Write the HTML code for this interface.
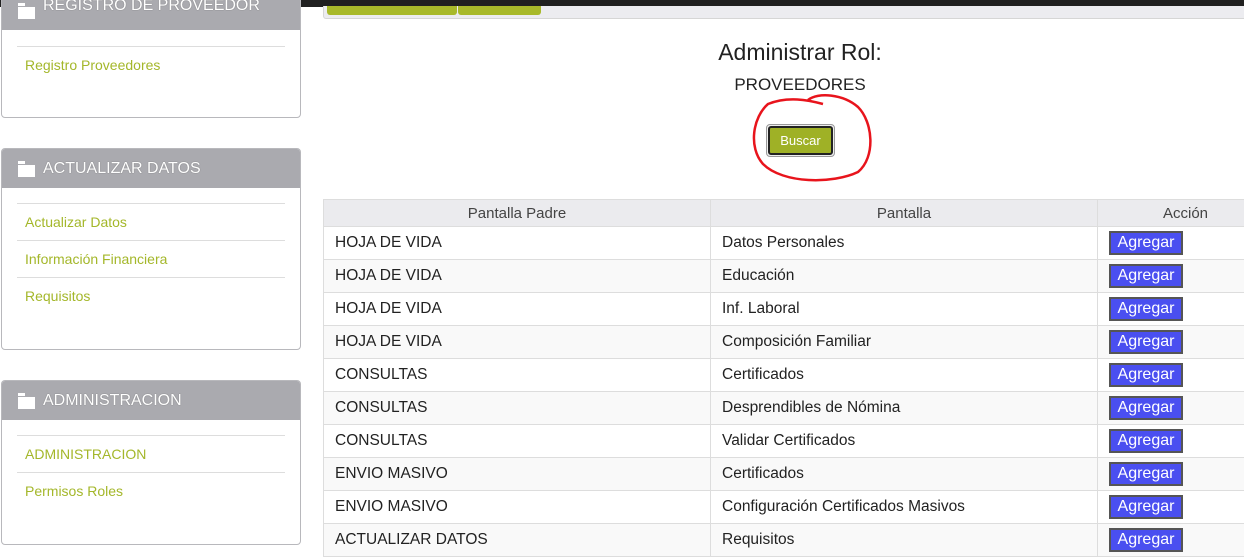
<!DOCTYPE html>
<html><head><meta charset="utf-8"><style>
*{margin:0;padding:0;box-sizing:border-box}
body{width:1244px;height:556px;overflow:hidden;background:#fff;font-family:"Liberation Sans",sans-serif;position:relative}
.top{position:absolute;left:0;top:0;width:1244px;height:7px;background:#202020}
.panel{position:absolute;left:1px;width:300px;border:1px solid #b8b8bc;border-radius:4px;background:#fff;overflow:hidden}
.ph{background:#aaaaaf;height:39px;color:#fff;font-size:16px;padding-left:41px;line-height:39px;position:relative;text-shadow:0 0 1px #666}
.ph:before{content:"";position:absolute;left:16px;top:14px;width:17px;height:12px;background:#fff;border-top:2px solid #aaaaaf}
.ph:after{content:"";position:absolute;left:16px;top:12px;width:7px;height:3px;background:#fff}
.lk{position:absolute;left:23px;font-size:14px;color:#a4b72a}
.hr{position:absolute;left:15px;width:268px;height:1px;background:#ddd}
.tbl{position:absolute;left:323px;top:199px;border-collapse:collapse;font-size:15.5px;color:#222;table-layout:fixed;width:1000px}
.tbl td,.tbl th{border:1px solid #ddd;height:33px;padding:0 11px;white-space:nowrap;overflow:hidden}
.tbl th{height:27px;background:#ebebee;font-weight:normal;color:#444;font-size:15px}
.tbl tr:nth-child(odd) td{background:#f9f9f9}
.btn{display:inline-block;background:#4a4ff0;color:#fff;border:2px solid #555;width:74px;height:24px;line-height:20px;text-align:center;font-size:16px;vertical-align:middle}
</style></head><body>
<div class="top"></div>
<div style="position:absolute;left:323px;top:6px;width:930px;height:13px;background:#ececf0;border:1px solid #d6d6d6;border-top:none;border-radius:0 0 3px 3px"></div>
<div style="position:absolute;left:327px;top:6px;width:130px;height:9px;background:#a8b92a;border-radius:0 0 3px 3px"></div>
<div style="position:absolute;left:458px;top:6px;width:83px;height:9px;background:#a8b92a;border-radius:0 0 3px 3px"></div>

<div class="panel" style="top:-10px;height:128px">
 <div class="ph" style="line-height:30px">REGISTRO DE PROVEEDOR</div>
 <div class="hr" style="top:55px"></div>
 <div class="lk" style="top:66px">Registro Proveedores</div>
</div>
<div class="panel" style="top:148px;height:202px">
 <div class="ph">ACTUALIZAR DATOS</div>
 <div class="hr" style="top:54px"></div>
 <div class="lk" style="top:65px">Actualizar Datos</div>
 <div class="hr" style="top:91px"></div>
 <div class="lk" style="top:102px">Información Financiera</div>
 <div class="hr" style="top:128px"></div>
 <div class="lk" style="top:139px">Requisitos</div>
</div>
<div class="panel" style="top:380px;height:165px">
 <div class="ph">ADMINISTRACION</div>
 <div class="hr" style="top:54px"></div>
 <div class="lk" style="top:65px">ADMINISTRACION</div>
 <div class="hr" style="top:91px"></div>
 <div class="lk" style="top:102px">Permisos Roles</div>
</div>

<div style="position:absolute;left:600px;width:400px;top:39px;text-align:center;font-size:23px;color:#222">Administrar Rol:</div>
<div style="position:absolute;left:600px;width:400px;top:75px;text-align:center;font-size:17px;color:#222">PROVEEDORES</div>
<div style="position:absolute;left:766px;top:124px;width:69px;height:33px;border:1px solid #999;border-radius:4px;background:#eee;padding:1px">
 <div style="width:100%;height:100%;background:#9fb126;border:2px solid #222;border-radius:3px;color:#fff;font-size:13px;text-align:center;line-height:25px">Buscar</div>
</div>
<svg style="position:absolute;left:748px;top:92px" width="130" height="95" viewBox="0 0 130 95"><path d="M75 12 C60 8 40 4 20 12 C5 25 0 55 15 72 C35 92 85 92 110 80 C128 65 125 30 110 15 C95 2 70 0 60 8" fill="none" stroke="#e8141c" stroke-width="2.5"/></svg>

<table class="tbl">
<colgroup><col style="width:387px"><col style="width:387px"><col style="width:226px"></colgroup>
<tr><th>Pantalla Padre</th><th>Pantalla</th><th style="text-align:left;padding-left:65px">Acción</th></tr>
<tr><td>HOJA DE VIDA</td><td>Datos Personales</td><td><span class="btn">Agregar</span></td></tr>
<tr><td>HOJA DE VIDA</td><td>Educación</td><td><span class="btn">Agregar</span></td></tr>
<tr><td>HOJA DE VIDA</td><td>Inf. Laboral</td><td><span class="btn">Agregar</span></td></tr>
<tr><td>HOJA DE VIDA</td><td>Composición Familiar</td><td><span class="btn">Agregar</span></td></tr>
<tr><td>CONSULTAS</td><td>Certificados</td><td><span class="btn">Agregar</span></td></tr>
<tr><td>CONSULTAS</td><td>Desprendibles de Nómina</td><td><span class="btn">Agregar</span></td></tr>
<tr><td>CONSULTAS</td><td>Validar Certificados</td><td><span class="btn">Agregar</span></td></tr>
<tr><td>ENVIO MASIVO</td><td>Certificados</td><td><span class="btn">Agregar</span></td></tr>
<tr><td>ENVIO MASIVO</td><td>Configuración Certificados Masivos</td><td><span class="btn">Agregar</span></td></tr>
<tr><td>ACTUALIZAR DATOS</td><td>Requisitos</td><td><span class="btn">Agregar</span></td></tr>
</table>
</body></html>
